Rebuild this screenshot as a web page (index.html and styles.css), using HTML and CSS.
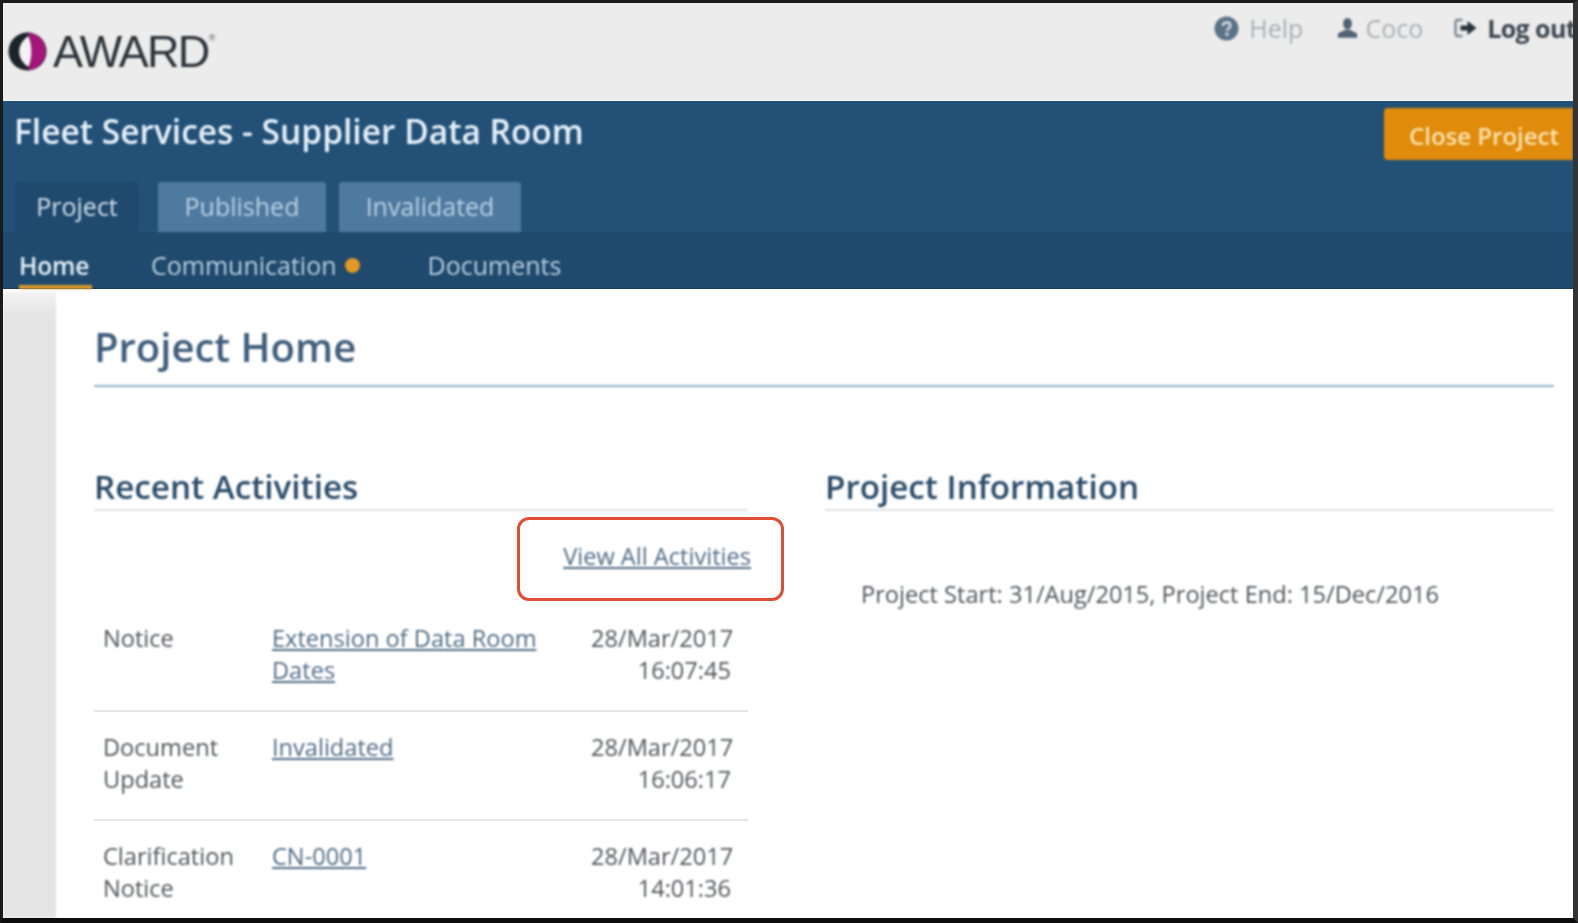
FILE: index.html
```html
<!DOCTYPE html>
<html lang="en">
<head>
<meta charset="utf-8">
<title>Project Home</title>
<link rel="stylesheet" href="styles.css">
</head>
<body>
<div class="frame">
  <header class="top">
    <div class="logo">
      <svg class="logo-mark" viewBox="0 0 40 40" width="39" height="39" aria-hidden="true">
        <circle cx="20" cy="20" r="19.500" fill="#1c2429"/>
        <path d="M21 .6A19.500 19.500 0 0 1 21 39.400C23 33 24 27 24 20S23 7 21 .6z" fill="#a8137c"/>
        <path d="M21 4C15 8 11.500 13.500 11.500 20S15 32 21 36C23 31 24 26 24 20S23 9 21 4z" fill="#f4f2f4"/>
      </svg>
      <span class="logo-word">AWARD</span><span class="logo-reg">®</span>
    </div>
    <nav class="usernav">
      <a class="unav">
        <svg viewBox="0 0 24 24" width="25" height="25" aria-hidden="true"><circle cx="12" cy="12" r="11.500" fill="#5b7186"/><path d="M8.500 9.500c0-2 1.600-3.300 3.700-3.300s3.500 1.200 3.500 3c0 2.800-3.200 2.600-3.200 5" fill="none" stroke="#c9d6e0" stroke-width="2.600"/><rect x="11" y="16" width="3" height="3" fill="#c9d6e0"/></svg>
        Help
      </a>
      <a class="unav unav-user">
        <svg viewBox="0 0 24 24" width="21" height="24" aria-hidden="true"><ellipse cx="12" cy="7" rx="5" ry="6.500" fill="#4f6274"/><path d="M1 23v-4c0-2 6-3 8-5h6c2 2 8 3 8 5v4z" fill="#4f6274"/></svg>
        Coco
      </a>
      <a class="unav unav-strong">
        <svg viewBox="0 0 24 24" width="25" height="24" aria-hidden="true"><path d="M9 4H4.500A2.500 2.500 0 0 0 2 6.500v11A2.500 2.500 0 0 0 4.500 20H9" fill="none" stroke="#7a8894" stroke-width="2.400"/><path d="M7 9.500h7V5l9 7-9 7v-4.500H7z" fill="#27323c"/></svg>
        Log out
      </a>
    </nav>
  </header>

  <section class="bar">
    <div class="bar-head">
      <h1 class="project-title">Fleet Services - Supplier Data Room</h1>
      <button class="close-btn" type="button">Close Project</button>
    </div>
    <div class="tabs">
      <a class="tab tab-active">Project</a>
      <a class="tab">Published</a>
      <a class="tab">Invalidated</a>
    </div>
  </section>

  <nav class="subnav">
    <a class="sub sub-active">Home</a>
    <a class="sub sub-comm">Communication<span class="dot"></span></a>
    <a class="sub sub-docs">Documents</a>
  </nav>

  <div class="body">
    <aside class="strip"></aside>
    <main class="main">
      <h2 class="page-title">Project Home</h2>
      <div class="cols">
        <section class="col-left">
          <h3 class="section-title">Recent Activities</h3>
          <div class="view-row">
            <div class="highlight"><a class="link" href="#">View All Activities</a></div>
          </div>
          <div class="row">
            <div class="type">Notice</div>
            <div class="subject"><a class="link" href="#">Extension of Data Room Dates</a></div>
            <div class="when">28/Mar/2017<br>16:07:45</div>
          </div>
          <div class="row">
            <div class="type">Document Update</div>
            <div class="subject"><a class="link" href="#">Invalidated</a></div>
            <div class="when">28/Mar/2017<br>16:06:17</div>
          </div>
          <div class="row row-last">
            <div class="type">Clarification Notice</div>
            <div class="subject"><a class="link" href="#">CN-0001</a></div>
            <div class="when">28/Mar/2017<br>14:01:36</div>
          </div>
        </section>
        <section class="col-right">
          <h3 class="section-title">Project Information</h3>
          <p class="info">Project Start: 31/Aug/2015, Project End: 15/Dec/2016</p>
        </section>
      </div>
    </main>
  </div>
</div>
</body>
</html>
```
FILE: styles.css
```css
* { box-sizing: border-box; }
html, body { margin: 0; padding: 0; background: #fff; }
body { font-family: "Open Sans", "Noto Sans", sans-serif; color: #50555a; }
a { color: inherit; }
h1, h2, h3, p { margin: 0; }

.frame {
  width: 1578px;
  height: 923px;
  border-style: solid;
  border-color: #1a1a1a #333 #0c0c0c #1a1a1a;
  border-width: 3px 5px 5px 3px;
  overflow: hidden;
  display: flex;
  flex-direction: column;
  background: #fff;
}

.top {
  height: 98px;
  flex: none;
  background: #ececec;
  display: flex;
  justify-content: space-between;
  align-items: flex-start;
  border-bottom: 1px solid #f6f8fa;
}
.logo { display: flex; align-items: flex-start; padding: 29px 0 0 5px; filter: blur(.8px); }
.logo-mark { flex: none; }
.logo-word {
  font-family: "Liberation Sans", Arial, sans-serif;
  font-size: 45px;
  line-height: 39px;
  color: #2b3238;
  margin-left: 6px;
  letter-spacing: -1.7px;
}
.logo-reg { font-size: 9px; color: #555; font-family: "Liberation Sans", sans-serif; margin-top: 1px; }

.usernav { display: flex; align-items: center; padding-top: 10px; margin-right: -3px; filter: blur(1px); }
.unav { display: flex; align-items: center; gap: 10px; font-size: 25px; line-height: 30px; color: #a9b0b6; margin-left: 35px; white-space: nowrap; }
.unav-user { margin-left: 34px; gap: 7px; }
.unav-strong { color: #3c4650; font-weight: 700; gap: 9px; letter-spacing: -.6px; margin-left: 30px; }

.bar {
  height: 131px;
  flex: none;
  background: #225077;
  display: flex;
  flex-direction: column;
  justify-content: space-between;
}
.bar-head { display: flex; justify-content: space-between; align-items: flex-start; }
.project-title {
  font-size: 33.500px;
  line-height: 44px;
  font-weight: 600;
  color: #e8f2fa;
  margin: 8px 0 0 11px;
  filter: blur(.8px);
}
.close-btn {
  height: 52px;
  width: 189px;
  margin: 7px 0 0 0;
  padding: 3px 0 0 25px;
  text-align: left;
  border: 0;
  border-radius: 4px 0 0 4px;
  background: #e08b0b;
  color: #fbe3b0;
  font-family: inherit;
  font-size: 24px;
  font-weight: 600;
  white-space: nowrap;
  filter: blur(.8px);
}

.tabs { display: flex; gap: 13px; padding-left: 12px; }
.tab {
  height: 50px;
  padding-bottom: 2px;
  display: flex;
  align-items: center;
  justify-content: center;
  font-size: 25px;
  background: #4f7aa0;
  color: #b9d0e2;
  width: 168px;
  border-radius: 3px 3px 0 0;
  filter: blur(.9px);
}
.tab + .tab + .tab { width: 182px; }
.tab-active { background: #1f4a6e; color: #d3e0ea; width: 124px; margin-right: 6px; }

.subnav {
  height: 57px;
  flex: none;
  background: #1f4a6e;
  display: flex;
  padding-left: 16px;
  border-bottom: 1px solid #1a3c5a;
}
.sub {
  font-size: 25px;
  line-height: 66px;
  height: 57px;
  color: #b9cfe0;
  white-space: nowrap;
  filter: blur(.8px);
}
.sub-active { color: #e8f0f6; font-weight: 600; font-size: 24.500px; line-height: 67px; letter-spacing: -.2px; width: 73px; border-bottom: 4px solid #dd9a28; }
.sub-comm { margin-left: 59px; display: flex; align-items: flex-start; }
.sub-docs { margin-left: 68px; }
.dot { width: 15px; height: 15px; border-radius: 50%; background: #e49a22; margin-left: 8px; margin-top: 26px; }

.body { flex: 1; display: flex; min-height: 0; }
.strip { width: 53px; flex: none; background: linear-gradient(#f4f3f4, #e4e4e4 24px); margin-top: 3px; filter: blur(.8px); }
.main { flex: 1; min-width: 0; padding: 0 19px 0 38px; }

.page-title {
  font-size: 40px;
  line-height: 54px;
  font-weight: 600;
  color: #3f5d7c;
  padding-top: 31px;
  height: 98px;
  border-bottom: 2px solid #8fb3c8;
  filter: blur(.9px);
}

.cols { display: grid; grid-template-columns: 654px 729px; column-gap: 77px; padding-top: 76px; }
.section-title {
  font-size: 33.200px;
  line-height: 48px;
  font-weight: 600;
  color: #2a4b69;
  height: 48px;
  border-bottom: 2px solid #dfe2e4;
  filter: blur(.9px);
}
.col-left, .col-right { min-width: 0; }

.view-row { height: 92px; display: flex; justify-content: flex-end; position: relative; }
.highlight {
  position: absolute;
  right: -36px;
  top: 6px;
  width: 267px;
  height: 84px;
  border: 3px solid #e04e37;
  border-radius: 12px;
  padding: 20px 30px 0 0;
  text-align: right;
  font-size: 23.600px;
  line-height: 32px;
}

.link { color: #4f6b85; text-decoration: underline; filter: blur(.9px); }
.row {
  display: grid;
  grid-template-columns: 169px 319px 140px;
  padding: 19px 0 24px 9px;
  height: 109px;
  font-size: 23.600px;
  line-height: 32px;
  border-bottom: 2px solid #e6e6e6;
}
.row-last { border-bottom: 0; }
.type { filter: blur(.9px); }
.when { text-align: right; white-space: nowrap; filter: blur(.9px); }

.info { font-size: 23.600px; line-height: 32px; padding: 67px 0 0 36px; filter: blur(.9px); }
```
